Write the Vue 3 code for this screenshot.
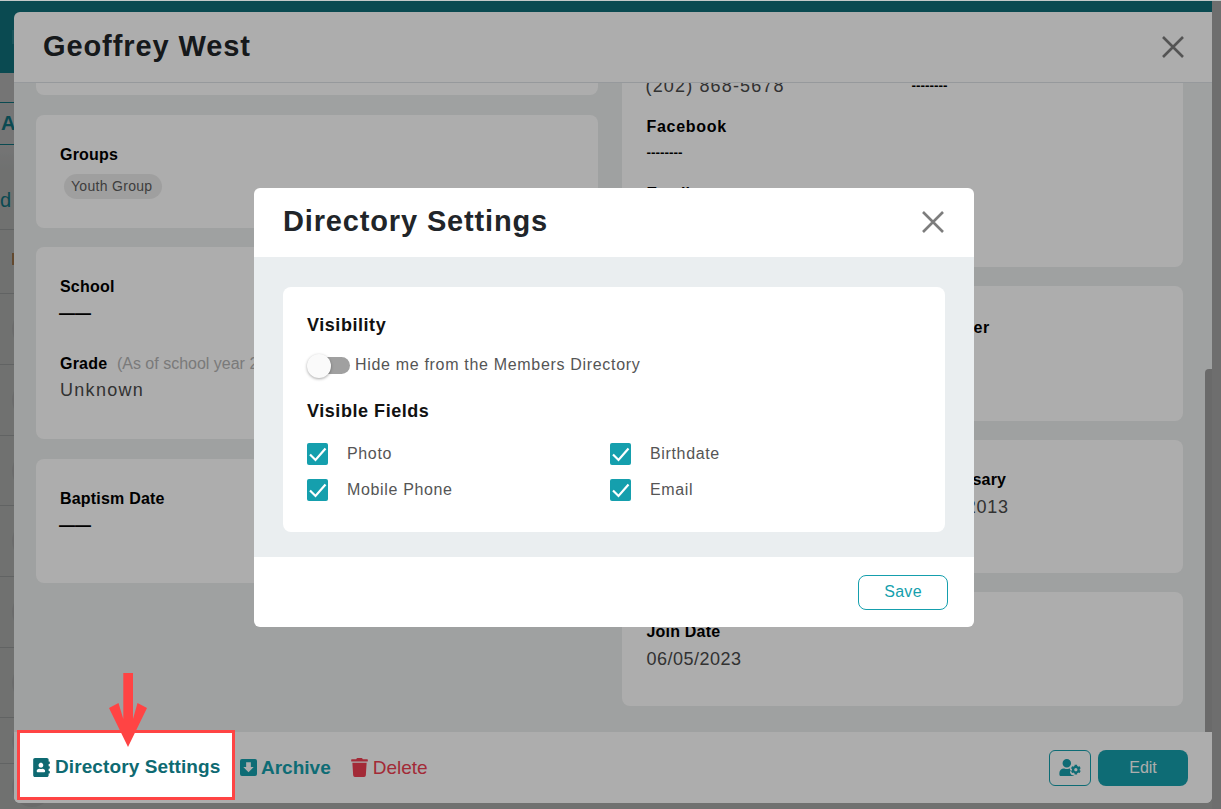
<script setup>
const rows = [64, 71, 71, 70, 71, 71, 70, 46, 46]

const visibleFields = ['Photo', 'Birthdate', 'Mobile Phone', 'Email']
</script>

<template>
  <div class="screen">
    <div class="stage">
      <!-- page behind the dialogs -->
      <div class="page">
        <div class="page-main">
          <div class="topbar"><span class="logo"></span></div>
          <div class="subnav"></div>
          <div class="tabs">Attendance</div>
          <div class="tab-shade"></div>
          <div class="toolbar">d</div>
          <div v-for="(h, i) in rows" :key="i" class="row" :style="{ height: h + 'px' }">
            <span v-if="i === 0" class="row-flag"></span>
            <span v-else class="avatar"></span>
          </div>
        </div>
        <div class="page-scroll"></div>
      </div>

      <div class="backdrop"></div>

      <!-- member dialog -->
      <div class="member">
        <div class="member-head">
          <h1>Geoffrey West</h1>
          <svg class="close" viewBox="0 0 24 24"><path d="M2 2 L22 22 M22 2 L2 22" /></svg>
        </div>

        <div class="member-body">
          <div class="col col-left">
            <div class="card card-top"></div>
            <div class="card card-groups">
              <div class="label">Groups</div>
              <span class="chip">Youth Group</span>
            </div>
            <div class="card card-school">
              <div class="label">School</div>
              <div class="dash">——</div>
              <div class="label grade">Grade <span class="hint">(As of school year 2023)</span></div>
              <div class="value unknown">Unknown</div>
            </div>
            <div class="card card-baptism">
              <div class="label">Baptism Date</div>
              <div class="dash">——</div>
            </div>
          </div>

          <div class="col col-right">
            <div class="card card-contact">
              <div class="fields">
                <div class="field">
                  <div class="label">Mobile Phone</div>
                  <div class="value phone">(202) 868-5678</div>
                </div>
                <div class="field">
                  <div class="label">Home Phone</div>
                  <div class="none">--------</div>
                </div>
                <div class="field">
                  <div class="label label-wide">Facebook</div>
                  <div class="none">--------</div>
                </div>
                <div class="field"></div>
                <div class="field">
                  <div class="label">Email</div>
                  <div class="none">--------</div>
                </div>
              </div>
            </div>
            <div class="card card-work">
              <div class="fields">
                <div class="field">
                  <div class="label">Occupation</div>
                </div>
                <div class="field">
                  <div class="label label-wide">Employer</div>
                </div>
              </div>
            </div>
            <div class="card card-dates">
              <div class="fields">
                <div class="field">
                  <div class="label">Birthdate</div>
                </div>
                <div class="field">
                  <div class="label">Anniversary</div>
                  <div class="value date">03/12/2013</div>
                </div>
              </div>
            </div>
            <div class="card card-join">
              <div class="label">Join Date</div>
              <div class="value">06/05/2023</div>
            </div>
          </div>

          <div class="scroll-thumb"></div>
        </div>

        <div class="member-foot">
          <button class="link link-dir">
            <svg class="ico" viewBox="0 0 448 512"><path d="M436 160c6.6 0 12-5.4 12-12v-40c0-6.6-5.4-12-12-12h-20V48c0-26.5-21.5-48-48-48H48C21.5 0 0 21.5 0 48v416c0 26.5 21.5 48 48 48h320c26.5 0 48-21.5 48-48v-48h20c6.6 0 12-5.4 12-12v-40c0-6.6-5.4-12-12-12h-20v-64h20c6.6 0 12-5.4 12-12v-40c0-6.6-5.4-12-12-12h-20v-64h20zm-228-32c35.3 0 64 28.7 64 64s-28.7 64-64 64-64-28.7-64-64 28.7-64 64-64zm112 236.8c0 10.6-10 19.2-22.4 19.2H118.4C106 384 96 375.4 96 364.8v-19.2c0-31.8 30.1-57.6 67.2-57.6h5c12.3 5.1 25.7 8 39.8 8s27.6-2.9 39.8-8h5c37.1 0 67.2 25.8 67.2 57.6v19.2z" /></svg>
            Directory Settings
            <svg class="arrow" viewBox="0 0 38 74"><polygon points="14.3,0 24,0 24,46 28.5,30 38,35 19,74 0,35 9.5,30 14.3,46" /></svg>
          </button>
          <button class="link link-archive">
            <svg class="ico-archive" viewBox="0 0 18 18"><path fill-rule="evenodd" d="M2 0h14a2 2 0 0 1 2 2v14a2 2 0 0 1-2 2H2a2 2 0 0 1-2-2V2a2 2 0 0 1 2-2zM6.5 3.5v5H3.500L9 14l5.500-5.500h-3v-5z" /></svg>
            Archive
          </button>
          <button class="link link-delete">
            <svg class="ico-trash" viewBox="0 0 448 512"><path d="M432 32H312l-9.4-18.7A24 24 0 0 0 281.1 0H166.8a23.72 23.72 0 0 0-21.4 13.3L136 32H16A16 16 0 0 0 0 48v32a16 16 0 0 0 16 16h416a16 16 0 0 0 16-16V48a16 16 0 0 0-16-16zM53.2 467a48 48 0 0 0 47.9 45h245.8a48 48 0 0 0 47.9-45L416 128H32z" /></svg>
            Delete
          </button>
          <span class="foot-space"></span>
          <button class="btn-cog">
            <svg viewBox="0 0 640 512"><path d="M610.5 341.3c2.6-14.1 2.6-28.5 0-42.6l25.8-14.9c3-1.7 4.3-5.2 3.3-8.5-6.7-21.6-18.2-41.2-33.2-57.4-2.3-2.5-6-3.1-9-1.4l-25.8 14.9c-10.9-9.3-23.4-16.5-36.9-21.3v-29.8c0-3.4-2.4-6.4-5.7-7.1-22.3-5-45-4.8-66.2 0-3.3.7-5.7 3.7-5.7 7.1v29.8c-13.5 4.8-26 12-36.9 21.3l-25.8-14.9c-2.9-1.7-6.7-1.1-9 1.4-15 16.2-26.5 35.8-33.2 57.4-1 3.3.4 6.8 3.3 8.5l25.8 14.9c-2.6 14.1-2.6 28.5 0 42.6l-25.8 14.9c-3 1.7-4.3 5.2-3.3 8.5 6.7 21.6 18.2 41.1 33.2 57.4 2.3 2.5 6 3.1 9 1.4l25.8-14.9c10.9 9.3 23.4 16.5 36.9 21.3v29.8c0 3.4 2.4 6.4 5.7 7.1 22.3 5 45 4.8 66.2 0 3.3-.7 5.7-3.7 5.7-7.1v-29.8c13.5-4.8 26-12 36.9-21.3l25.8 14.9c2.9 1.7 6.7 1.1 9-1.4 15-16.2 26.5-35.8 33.2-57.4 1-3.3-.4-6.8-3.3-8.5l-25.8-14.9zM496 368.5c-26.8 0-48.5-21.8-48.5-48.5s21.8-48.5 48.5-48.5 48.5 21.8 48.5 48.5-21.7 48.5-48.5 48.5zM224 256c70.7 0 128-57.3 128-128S294.7 0 224 0 96 57.3 96 128s57.3 128 128 128zm201.2 226.5c-2.3-1.2-4.6-2.6-6.8-3.9l-7.9 4.6c-6 3.4-12.8 5.3-19.6 5.3-10.9 0-21.4-4.6-28.9-12.6-18.3-19.8-32.3-43.9-40.2-69.6-5.5-17.7 1.9-36.4 17.9-45.7l7.9-4.6c-.1-2.6-.1-5.2 0-7.8l-7.9-4.6c-16-9.2-23.4-28-17.9-45.7.9-2.9 2.2-5.8 3.2-8.7-3.8-.3-7.5-1.2-11.4-1.2h-16.7c-22.2 10.2-46.9 16-72.9 16s-50.6-5.8-72.9-16h-16.7C60.2 288 0 348.2 0 422.4V464c0 26.5 21.5 48 48 48h352c10.1 0 19.5-3.2 27.2-8.5-1.2-3.8-2-7.7-2-11.8v-9.2z" /></svg>
          </button>
          <button class="btn-edit">Edit</button>
        </div>
      </div>

      <div class="backdrop"></div>

      <!-- directory settings dialog -->
      <div class="settings">
        <div class="settings-head">
          <h2>Directory Settings</h2>
          <svg class="close" viewBox="0 0 24 24"><path d="M2 2 L22 22 M22 2 L2 22" /></svg>
        </div>
        <div class="settings-body">
          <div class="settings-card">
            <h3>Visibility</h3>
            <div class="toggle-row">
              <span class="toggle"><span class="thumb"></span></span>
              <span class="toggle-text">Hide me from the Members Directory</span>
            </div>
            <h3 class="fields-title">Visible Fields</h3>
            <div class="checks">
              <label v-for="f in visibleFields" :key="f" class="check">
                <span class="box">
                  <svg viewBox="0 0 21 22"><path d="M3 11.5 L8.5 17 L18.5 5.5" /></svg>
                </span>
                {{ f }}
              </label>
            </div>
          </div>
        </div>
        <div class="settings-foot">
          <button class="btn-save">Save</button>
        </div>
      </div>
    </div>
  </div>
</template>

<style>
html, body {
  margin: 0;
  overflow: hidden;
}
</style>

<style scoped>
.screen {
  width: 1221px;
  height: 809px;
  padding-top: 1px;
  box-sizing: border-box;
  background: #c4c9c9;
  font-family: "Liberation Sans", Arial, sans-serif;
  overflow: hidden;
}

.stage {
  position: relative;
  height: 808px;
  overflow: hidden;
}

button {
  font-family: inherit;
  cursor: pointer;
}

/* page */
.page {
  display: flex;
  height: 100%;
  background: #f3f6f5;
}

.page-main {
  flex: 1;
}

.page-scroll {
  width: 9px;
  background: #f1f1f1;
}

.topbar {
  height: 72px;
  background: #18a1b2;
  padding: 29px 0 0 12px;
  box-sizing: border-box;
}

.logo {
  display: block;
  width: 14px;
  height: 14px;
  background: #37b9c8;
}

.subnav {
  height: 29px;
  background: #fff;
}

.tabs {
  height: 41px;
  border-top: 1px solid #18a1b2;
  border-bottom: 1px solid #18a1b2;
  color: #18a1b2;
  font-size: 20px;
  font-weight: 700;
  line-height: 41px;
  padding-left: 1px;
  background: #fff;
}

.tab-shade {
  height: 25px;
  background: linear-gradient(#fff, #f3f6f5);
}

.toolbar {
  height: 60px;
  color: #18a1b2;
  font-size: 20px;
  line-height: 60px;
  border-bottom: 1px solid #d5d8d7;
  box-sizing: border-box;
}

.row {
  display: flex;
  align-items: center;
  padding-left: 12px;
  box-sizing: border-box;
  border-bottom: 1px solid #d5d8d7;
}

.row-flag {
  width: 6px;
  height: 12px;
  background: #d9a066;
  margin-top: -6px;
}

.avatar {
  width: 40px;
  height: 40px;
  flex: none;
  border-radius: 50%;
  background: #e6e8e8;
}

.backdrop {
  position: absolute;
  inset: 0;
  background: rgba(0, 0, 0, 0.32);
}

/* member dialog */
.member {
  position: absolute;
  left: 14px;
  top: 11px;
  width: 1198px;
  height: 791px;
  display: flex;
  flex-direction: column;
  background: #fff;
  border-radius: 6px 0 6px 6px;
}

.member-head {
  height: 71px;
  flex: none;
  display: flex;
  align-items: center;
  justify-content: space-between;
  padding: 0 27px 0 29px;
  box-sizing: border-box;
  border-bottom: 1px solid #dee2e6;
}

.member-head h1 {
  margin: -2px 0 0;
  font-size: 29px;
  font-weight: 700;
  letter-spacing: 0.9px;
  color: #212529;
}

.close {
  width: 24px;
  height: 24px;
  flex: none;
}

.close path {
  stroke: #7d7d7d;
  stroke-width: 2.6;
  fill: none;
}

.member-body {
  position: relative;
  flex: 1;
  display: flex;
  align-items: flex-start;
  gap: 24px;
  padding: 0 29px 0 22px;
  background: #ebeeed;
  overflow: hidden;
}

.col {
  flex: 1;
  min-width: 0;
  display: flex;
  flex-direction: column;
  gap: 19.5px;
}

.col-left {
  margin-top: -88px;
}

.col-right {
  margin-top: -63px;
  gap: 19px;
}

.card {
  background: #fff;
  border-radius: 8px;
  padding: 28px 24px 0;
  box-sizing: border-box;
}

.card-top { height: 100px; }
.card-groups { height: 113px; }
.card-school { height: 192px; }
.card-baptism { height: 124px; }
.card-contact { height: 247px; padding-left: 25px; }
.card-work { height: 135px; padding: 30px 25px 0; }
.card-dates { height: 133px; padding-left: 25px; }
.card-join { height: 114px; padding-left: 25px; }

.label {
  font-size: 16px;
  font-weight: 700;
  line-height: 24px;
  letter-spacing: 0.2px;
  color: #000;
}

.label-wide {
  letter-spacing: 0.7px;
}

.chip {
  display: inline-block;
  margin: 7px 0 0 4px;
  height: 25px;
  line-height: 25px;
  padding: 0 10px 0 7px;
  border-radius: 13px;
  background: #ebebeb;
  font-size: 14px;
  letter-spacing: 0.3px;
  color: #5c5c5c;
}

.dash {
  font-size: 16px;
  font-weight: 700;
  line-height: 30px;
  color: #000;
  margin-left: -1px;
}

.grade {
  margin-top: 23px;
}

.hint {
  margin-left: 5px;
  font-weight: 400;
  color: #b4b4b4;
  letter-spacing: 0;
}

.value {
  font-size: 18px;
  line-height: 30px;
  letter-spacing: 0.5px;
  color: #4a4a4a;
}

.unknown {
  letter-spacing: 1.3px;
  margin-top: -1px;
}

.phone {
  letter-spacing: 1.15px;
  margin-left: -1px;
  margin-top: -1px;
  margin-bottom: 1px;
}

.date {
  letter-spacing: 0.7px;
}

.none {
  font-size: 13.5px;
  font-weight: 700;
  line-height: 28px;
  margin-bottom: 2px;
  color: #000;
}

.fields {
  display: grid;
  grid-template-columns: 265px 1fr;
}

.field {
  margin-bottom: 13px;
}

.scroll-thumb {
  position: absolute;
  right: 0;
  top: 286px;
  width: 7px;
  height: 363px;
  background: #9d9d9d;
  border-radius: 4px 0 0 0;
}

.member-foot {
  height: 71px;
  flex: none;
  display: flex;
  align-items: center;
  padding: 0 24px 0 3px;
  box-sizing: border-box;
  background: #fff;
  border-radius: 0 0 6px 6px;
}

.link {
  display: flex;
  align-items: center;
  background: none;
  border: 0;
  padding: 0;
  font-size: 19px;
  color: #15a0ad;
}

.link-dir {
  position: relative;
  z-index: 5;
  align-self: flex-start;
  margin-top: -2px;
  width: 218px;
  height: 70px;
  box-sizing: border-box;
  padding: 4px 0 0 13px;
  gap: 5px;
  background: #fff;
  border: 3px solid #ff4444;
  font-weight: 700;
  letter-spacing: 0.1px;
  color: #0e6a72;
}

.ico {
  width: 17px;
  height: 19px;
}

.ico path {
  fill: #0e6a72;
}

.arrow {
  position: absolute;
  left: 89px;
  top: -60px;
  width: 38px;
  height: 74px;
}

.arrow polygon {
  fill: #ff4444;
}

.link-archive {
  margin-left: 5px;
  gap: 4px;
  font-weight: 700;
}

.ico-archive {
  width: 17px;
  height: 17px;
}

.ico-archive path {
  fill: #15a0ad;
}

.link-delete {
  margin-left: 20px;
  gap: 5px;
  color: #f03e52;
}

.ico-trash {
  width: 17px;
  height: 19px;
}

.ico-trash path {
  fill: #f03e52;
}

.foot-space {
  flex: 1;
}

.btn-cog {
  width: 42px;
  height: 36px;
  padding: 0;
  display: flex;
  align-items: center;
  justify-content: center;
  background: none;
  border: 1px solid #15a0ad;
  border-radius: 6px;
}

.btn-cog svg {
  width: 22px;
  height: 17px;
}

.btn-cog path {
  fill: #15a0ad;
}

.btn-edit {
  margin-left: 7px;
  width: 90px;
  height: 36px;
  border: 0;
  border-radius: 8px;
  background: #15a0ad;
  color: #fff;
  font-size: 16px;
}

/* settings dialog */
.settings {
  position: absolute;
  left: 254px;
  top: 187px;
  width: 720px;
  height: 439px;
  display: flex;
  flex-direction: column;
  background: #fff;
  border-radius: 6px;
  overflow: hidden;
}

.settings-head {
  height: 69px;
  flex: none;
  display: flex;
  align-items: center;
  justify-content: space-between;
  padding: 0 29px 2px;
  box-sizing: border-box;
}

.settings-head h2 {
  margin: 0;
  font-size: 29px;
  font-weight: 700;
  letter-spacing: 0.85px;
  color: #212529;
}

.settings-body {
  flex: 1;
  padding: 30px 29px 25px;
  background: #eaeef0;
}

.settings-card {
  height: 245px;
  padding: 25px 24px 0;
  box-sizing: border-box;
  border-radius: 8px;
  background: #fff;
}

.settings-card h3 {
  margin: 0;
  font-size: 18px;
  line-height: 26px;
  font-weight: 700;
  color: #111;
  letter-spacing: 0.55px;
}

.toggle-row {
  display: flex;
  align-items: center;
  margin-top: 14px;
  height: 26px;
}

.toggle {
  position: relative;
  width: 41px;
  height: 17px;
  margin-left: 2px;
  border-radius: 9px;
  background: #a0a0a0;
}

.thumb {
  position: absolute;
  left: -2px;
  top: -3px;
  width: 24px;
  height: 24px;
  border-radius: 50%;
  background: #fafafa;
  box-shadow: 0 1px 3px rgba(0, 0, 0, 0.35);
}

.toggle-text {
  margin-left: 5px;
  font-size: 16px;
  letter-spacing: 0.68px;
  color: #555;
}

.settings-card .fields-title {
  margin-top: 20px;
}

.checks {
  display: grid;
  grid-template-columns: 303px 1fr;
  row-gap: 14px;
  margin-top: 19px;
}

.check {
  display: flex;
  align-items: center;
  height: 22px;
  font-size: 16px;
  letter-spacing: 0.65px;
  color: #555;
}

.box {
  width: 21px;
  height: 22px;
  margin-right: 19px;
  border-radius: 2px;
  background: #159fad;
}

.box svg {
  display: block;
  width: 21px;
  height: 22px;
}

.box path {
  fill: none;
  stroke: #fff;
  stroke-width: 2.2;
}

.settings-foot {
  height: 70px;
  flex: none;
  display: flex;
  align-items: center;
  justify-content: flex-end;
  padding: 0 26px 0 0;
}

.btn-save {
  width: 90px;
  height: 35px;
  background: #fff;
  border: 1px solid #159fad;
  border-radius: 8px;
  color: #159fad;
  font-size: 16px;
  letter-spacing: 0.3px;
}
</style>
